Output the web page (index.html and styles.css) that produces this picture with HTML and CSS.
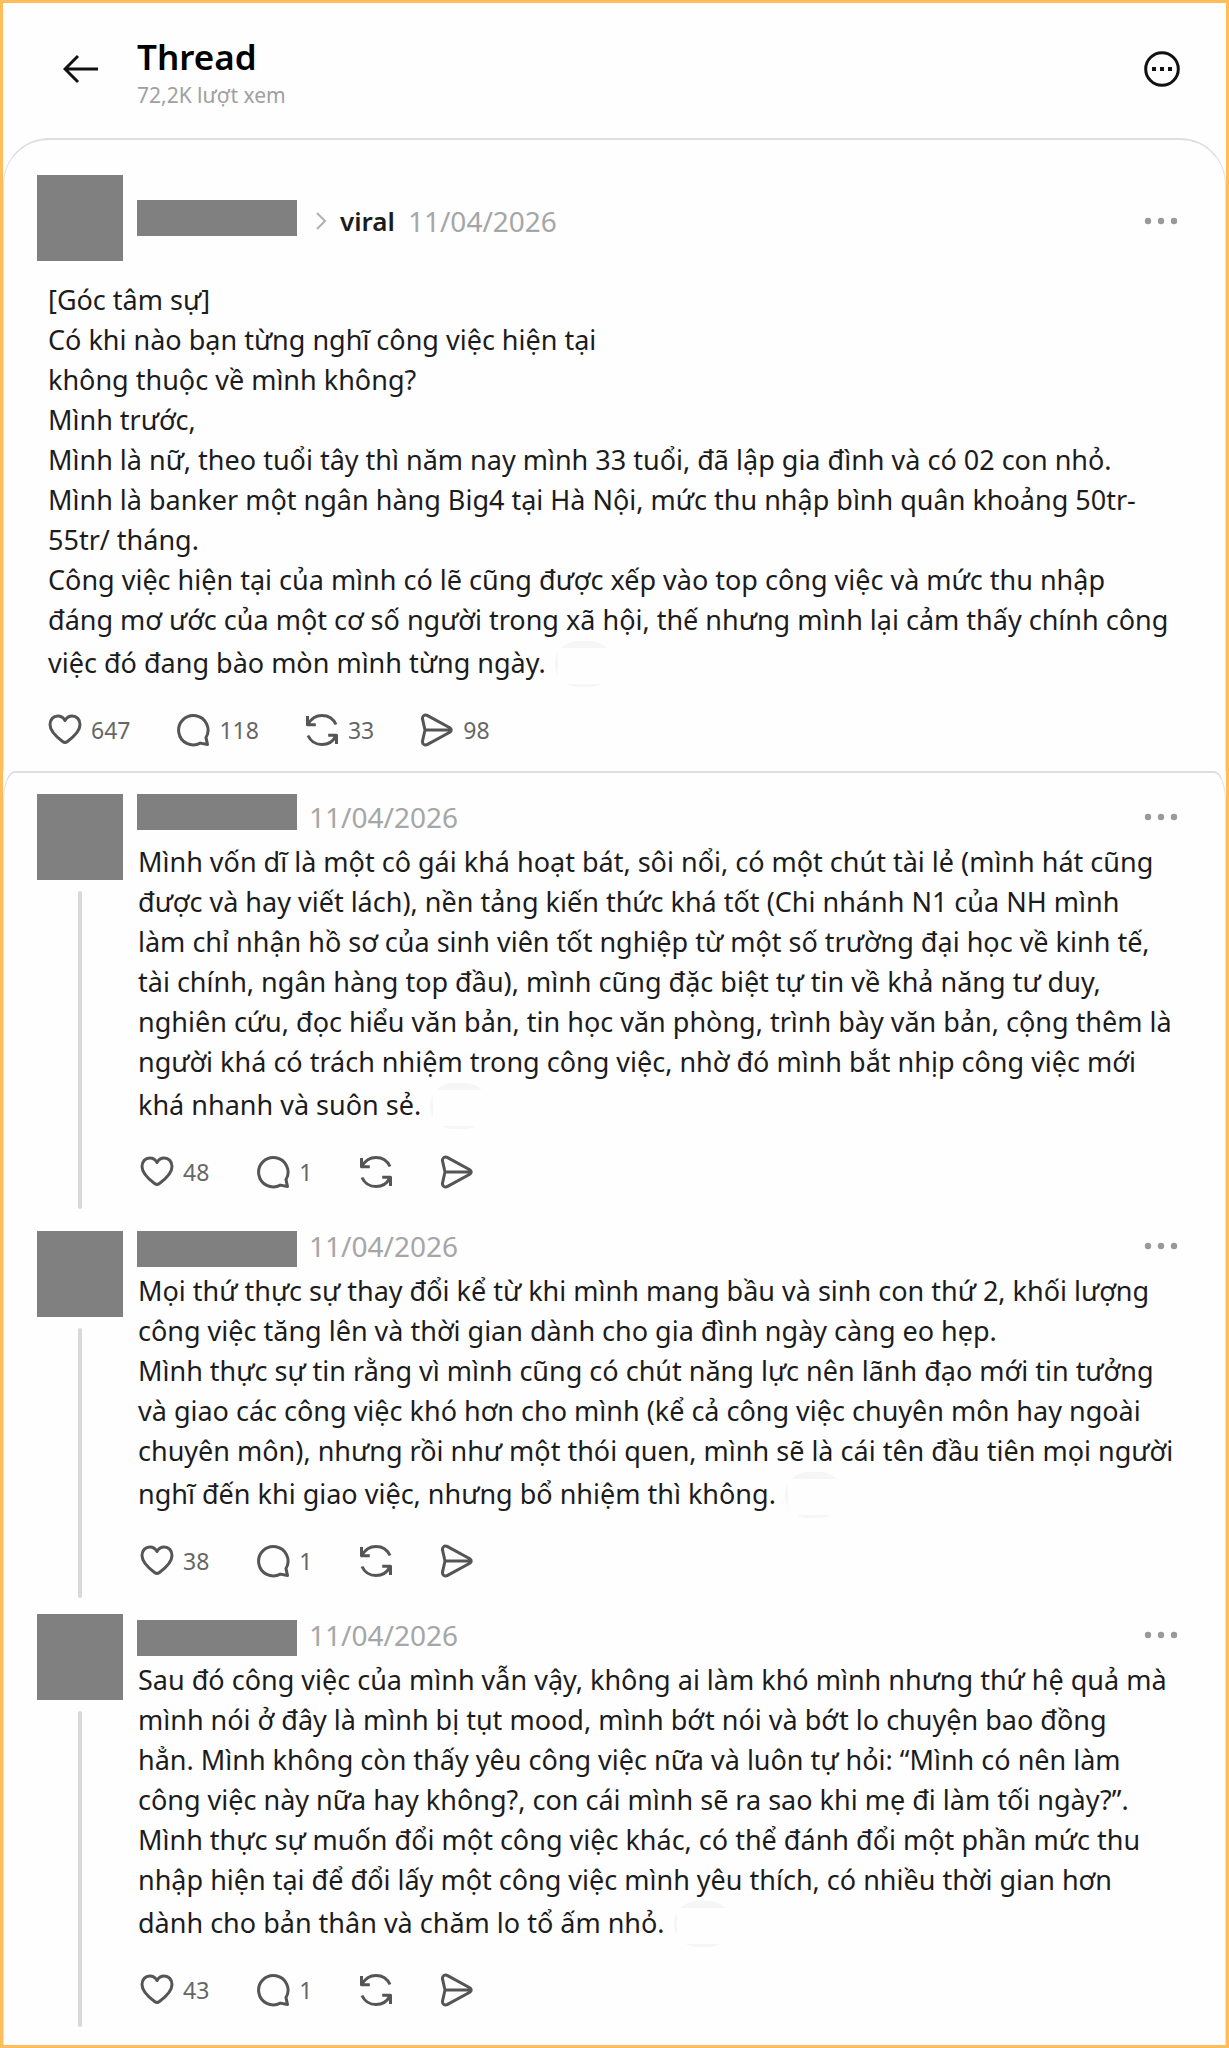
FILE: index.html
```html
<!DOCTYPE html>
<html lang="vi">
<head>
<meta charset="utf-8">
<meta name="viewport" content="width=device-width, initial-scale=1">
<title>Thread</title>
<link rel="stylesheet" href="styles.css">
</head>
<body>
<svg class="sprite" aria-hidden="true">
  <symbol id="heart" viewBox="0 0 34 34"><path d="M17 7.500C15.200 4.200 12.600 3 9.800 3 5.300 3 2 6.500 2 11.500c0 7 6.500 12.500 12.600 17 1.600 1.200 3.200 1.200 4.800 0C25.500 24 32 18.500 32 11.500 32 6.500 28.700 3 24.200 3c-2.800 0-5.400 1.200-7.200 4.500Z"/></symbol>
  <symbol id="reply" viewBox="0 0 34 34"><path d="M31.500 31.500 30 24.600A14.700 14.700 0 1 0 24.300 30.100Z"/></symbol>
  <symbol id="repost" viewBox="0 0 34 34"><path d="M2.500 3v8.800h8.300M3 11.300C6 5.500 11 2.400 17 2.400c6.200 0 11.400 3.400 14 9.100M31.500 31v-8.800h-8.300M31 22.700C28 28.500 23 31.600 17 31.600c-6.200 0-11.400-3.400-14-9.100"/></symbol>
  <symbol id="send" viewBox="0 0 34 34"><path d="M5 17h26M2.600 6.400C1.800 3 4.800 1 7.600 2.600l22.200 12.200c1.900 1.100 1.900 3.300 0 4.400L7.600 31.400c-2.800 1.600-5.800-.4-5-3.800L5 17Z"/></symbol>
  <symbol id="more" viewBox="0 0 34 8"><circle cx="4" cy="4" r="3.200"/><circle cx="17" cy="4" r="3.200"/><circle cx="30" cy="4" r="3.200"/></symbol>
</svg>
<div class="frame">
  <header class="topbar">
    <button class="btn" aria-label="Quay lại"><svg class="topbar__icon" viewBox="0 0 36 36"><path d="M35 18H2M15 5 2 18l13 13"/></svg></button>
    <div class="topbar__titles">
      <h1 class="topbar__title">Thread</h1>
      <p class="topbar__views">72,2K lượt xem</p>
    </div>
    <button class="btn" aria-label="Tùy chọn"><svg class="topbar__icon" viewBox="0 0 36 36"><circle cx="18" cy="18" r="16.300"/><path class="solid" d="M8 16h4v4H8zM16 16h4v4h-4zM24 16h4v4h-4z"/></svg></button>
  </header>
  <main>
    <article class="post">
      <div class="post__head">
        <span class="avatar"></span>
        <span class="name"></span>
        <div class="post__meta">
          <svg class="chevron" viewBox="0 0 12 20"><path d="m2 2 8 8-8 8"/></svg>
          <a class="topic" href="#viral">viral</a>
          <time class="date" datetime="2026-04-11">11/04/2026</time>
          <button class="btn more" aria-label="Thêm"><svg><use href="#more"/></svg></button>
        </div>
      </div>
      <p class="text">[Góc tâm sự]<br>Có khi nào bạn từng nghĩ công việc hiện tại<br>không thuộc về mình không?<br>Mình trước,<br>Mình là nữ, theo tuổi tây thì năm nay mình 33 tuổi, đã lập gia đình và có 02 con nhỏ.<br>Mình là banker một ngân hàng Big4 tại Hà Nội, mức thu nhập bình quân khoảng 50tr-<br>55tr/ tháng.<br>Công việc hiện tại của mình có lẽ cũng được xếp vào top công việc và mức thu nhập<br>đáng mơ ước của một cơ số người trong xã hội, thế nhưng mình lại cảm thấy chính công<br>việc đó đang bào mòn mình từng ngày. <span class="pill"></span></p>
      <div class="actions">
        <button class="btn action"><svg><use href="#heart"/></svg>647</button>
        <button class="btn action"><svg><use href="#reply"/></svg>118</button>
        <button class="btn action"><svg><use href="#repost"/></svg>33</button>
        <button class="btn action"><svg><use href="#send"/></svg>98</button>
      </div>
    </article>
    <section class="replies">
      <article class="reply reply--lead">
        <div class="rail"><span class="avatar"></span></div>
        <div class="reply__body">
          <div class="reply__head">
            <span class="name"></span>
            <time class="date" datetime="2026-04-11">11/04/2026</time>
            <button class="btn more" aria-label="Thêm"><svg><use href="#more"/></svg></button>
          </div>
          <p class="text">Mình vốn dĩ là một cô gái khá hoạt bát, sôi nổi, có một chút tài lẻ (mình hát cũng<br>được và hay viết lách), nền tảng kiến thức khá tốt (Chi nhánh N1 của NH mình<br>làm chỉ nhận hồ sơ của sinh viên tốt nghiệp từ một số trường đại học về kinh tế,<br>tài chính, ngân hàng top đầu), mình cũng đặc biệt tự tin về khả năng tư duy,<br>nghiên cứu, đọc hiểu văn bản, tin học văn phòng, trình bày văn bản, cộng thêm là<br>người khá có trách nhiệm trong công việc, nhờ đó mình bắt nhịp công việc mới<br>khá nhanh và suôn sẻ. <span class="pill"></span></p>
          <div class="actions">
            <button class="btn action"><svg><use href="#heart"/></svg>48</button>
            <button class="btn action"><svg><use href="#reply"/></svg>1</button>
            <button class="btn action" aria-label="Đăng lại"><svg><use href="#repost"/></svg></button>
            <button class="btn action" aria-label="Chia sẻ"><svg><use href="#send"/></svg></button>
          </div>
        </div>
      </article>
      <article class="reply">
        <div class="rail"><span class="avatar"></span></div>
        <div class="reply__body">
          <div class="reply__head">
            <span class="name"></span>
            <time class="date" datetime="2026-04-11">11/04/2026</time>
            <button class="btn more" aria-label="Thêm"><svg><use href="#more"/></svg></button>
          </div>
          <p class="text">Mọi thứ thực sự thay đổi kể từ khi mình mang bầu và sinh con thứ 2, khối lượng<br>công việc tăng lên và thời gian dành cho gia đình ngày càng eo hẹp.<br>Mình thực sự tin rằng vì mình cũng có chút năng lực nên lãnh đạo mới tin tưởng<br>và giao các công việc khó hơn cho mình (kể cả công việc chuyên môn hay ngoài<br>chuyên môn), nhưng rồi như một thói quen, mình sẽ là cái tên đầu tiên mọi người<br>nghĩ đến khi giao việc, nhưng bổ nhiệm thì không. <span class="pill"></span></p>
          <div class="actions">
            <button class="btn action"><svg><use href="#heart"/></svg>38</button>
            <button class="btn action"><svg><use href="#reply"/></svg>1</button>
            <button class="btn action" aria-label="Đăng lại"><svg><use href="#repost"/></svg></button>
            <button class="btn action" aria-label="Chia sẻ"><svg><use href="#send"/></svg></button>
          </div>
        </div>
      </article>
      <article class="reply reply--last">
        <div class="rail"><span class="avatar"></span></div>
        <div class="reply__body">
          <div class="reply__head">
            <span class="name"></span>
            <time class="date" datetime="2026-04-11">11/04/2026</time>
            <button class="btn more" aria-label="Thêm"><svg><use href="#more"/></svg></button>
          </div>
          <p class="text">Sau đó công việc của mình vẫn vậy, không ai làm khó mình nhưng thứ hệ quả mà<br>mình nói ở đây là mình bị tụt mood, mình bớt nói và bớt lo chuyện bao đồng<br>hẳn. Mình không còn thấy yêu công việc nữa và luôn tự hỏi: “Mình có nên làm<br>công việc này nữa hay không?, con cái mình sẽ ra sao khi mẹ đi làm tối ngày?”.<br>Mình thực sự muốn đổi một công việc khác, có thể đánh đổi một phần mức thu<br>nhập hiện tại để đổi lấy một công việc mình yêu thích, có nhiều thời gian hơn<br>dành cho bản thân và chăm lo tổ ấm nhỏ. <span class="pill"></span></p>
          <div class="actions">
            <button class="btn action"><svg><use href="#heart"/></svg>43</button>
            <button class="btn action"><svg><use href="#reply"/></svg>1</button>
            <button class="btn action" aria-label="Đăng lại"><svg><use href="#repost"/></svg></button>
            <button class="btn action" aria-label="Chia sẻ"><svg><use href="#send"/></svg></button>
          </div>
        </div>
      </article>
    </section>
  </main>
</div>
</body>
</html>
```
FILE: styles.css
```css
* { box-sizing: border-box; }

body {
  margin: 0;
  background: #fefefe;
  color: #1c1c1c;
  font-family: "Noto Sans", "Open Sans", sans-serif;
  font-size: 27px;
  line-height: 40px;
}

h1, p { margin: 0; }

.sprite { position: absolute; width: 0; height: 0; }

.btn {
  display: flex;
  align-items: center;
  padding: 0;
  border: 0;
  background: none;
  color: inherit;
  font: inherit;
}

.frame { border: 3px solid #ffbe5b; min-height: 100vh; }

/* Header */
.topbar {
  display: flex;
  align-items: center;
  gap: 38px;
  height: 135px;
  padding: 0 46px 4px 60px;
}
.topbar__icon {
  width: 36px;
  height: 36px;
  fill: none;
  stroke: #111;
  stroke-width: 3;
}
.topbar__icon .solid { fill: #111; stroke: none; }
.topbar__titles { flex: 1; padding-top: 10px; }
.topbar__title {
  color: #000;
  font-size: 35px;
  font-weight: 600;
  line-height: 42px;
}
.topbar__views { color: #a0a0a0; font-size: 21px; line-height: 34px; }

/* Shared pieces */
.avatar { flex: none; width: 86px; height: 86px; background: #808080; }
.name { flex: none; width: 160px; height: 36px; background: #808080; }
.date { color: #a6a6a6; font-size: 28px; line-height: 30px; }
.more { margin-left: auto; }
.more svg { width: 34px; height: 8px; fill: #999; }

.pill {
  display: inline-block;
  width: 58px;
  height: 46px;
  margin: 1px 0 0 2px;
  border-radius: 24px;
  background: linear-gradient(#fefefe, #fefefe) 3px 7px / 100% 36px no-repeat #f6f6f6;
  vertical-align: -14px;
}

.actions { display: flex; gap: 46px; height: 34px; margin-top: 26px; }
.action { gap: 9px; color: #666; font-size: 23px; line-height: 34px; }
.action svg {
  width: 34px;
  height: 34px;
  fill: none;
  stroke: #555;
  stroke-width: 3;
  stroke-linejoin: round;
}

/* Opening post */
.post {
  padding: 35px 33px 24px;
  border: 1px solid #e4e4e4;
  border-top: 2px solid #dedede;
  border-bottom: 0;
  border-radius: 46px 46px 0 0;
}
.post__head { display: flex; align-items: center; padding-right: 14px; }
.post__head .name { margin-left: 14px; }
.post__meta { display: flex; flex: 1; align-items: center; padding-top: 6px; }
.post .text, .post .actions { margin-left: 11px; }
.post .text { margin-top: 19px; white-space: nowrap; }
.chevron {
  width: 12px;
  height: 20px;
  margin: 0 13px 0 18px;
  fill: none;
  stroke: #b0b0b0;
  stroke-width: 2;
}
.topic {
  margin-right: 13px;
  color: #1c1c1c;
  font-size: 26px;
  font-weight: 600;
  text-decoration: none;
}

/* Replies */
.replies {
  padding: 21px 33px 18px;
  border: 1px solid #e4e4e4;
  border-top: 2px solid #dedede;
  border-bottom: 0;
  border-radius: 12px 12px 0 0 / 30px 30px 0 0;
}
.reply {
  display: grid;
  grid-template-columns: 86px 1fr;
  gap: 14px;
  margin-bottom: 16px;
}
.reply--lead { margin-bottom: 22px; }
.reply--last { margin-bottom: 0; }
.rail { display: flex; flex-direction: column; align-items: center; gap: 11px; }
.rail::after {
  content: "";
  flex: 1;
  width: 4px;
  border-radius: 2px;
  background: #d9d9d9;
}
.reply__body { padding-bottom: 20px; }
.reply--last .reply__body { padding-top: 6px; }
.reply__head {
  display: flex;
  align-items: flex-start;
  gap: 12px;
  height: 36px;
  padding-right: 14px;
}
.reply__head .more { height: 30px; }
.reply--lead .reply__head { height: 44px; }
.reply--lead .date, .reply--lead .more { margin-top: 8px; }
.reply .text { margin: 4px 0 0 1px; white-space: nowrap; }
.reply .actions { gap: 47px; margin-left: 3px; }
```
